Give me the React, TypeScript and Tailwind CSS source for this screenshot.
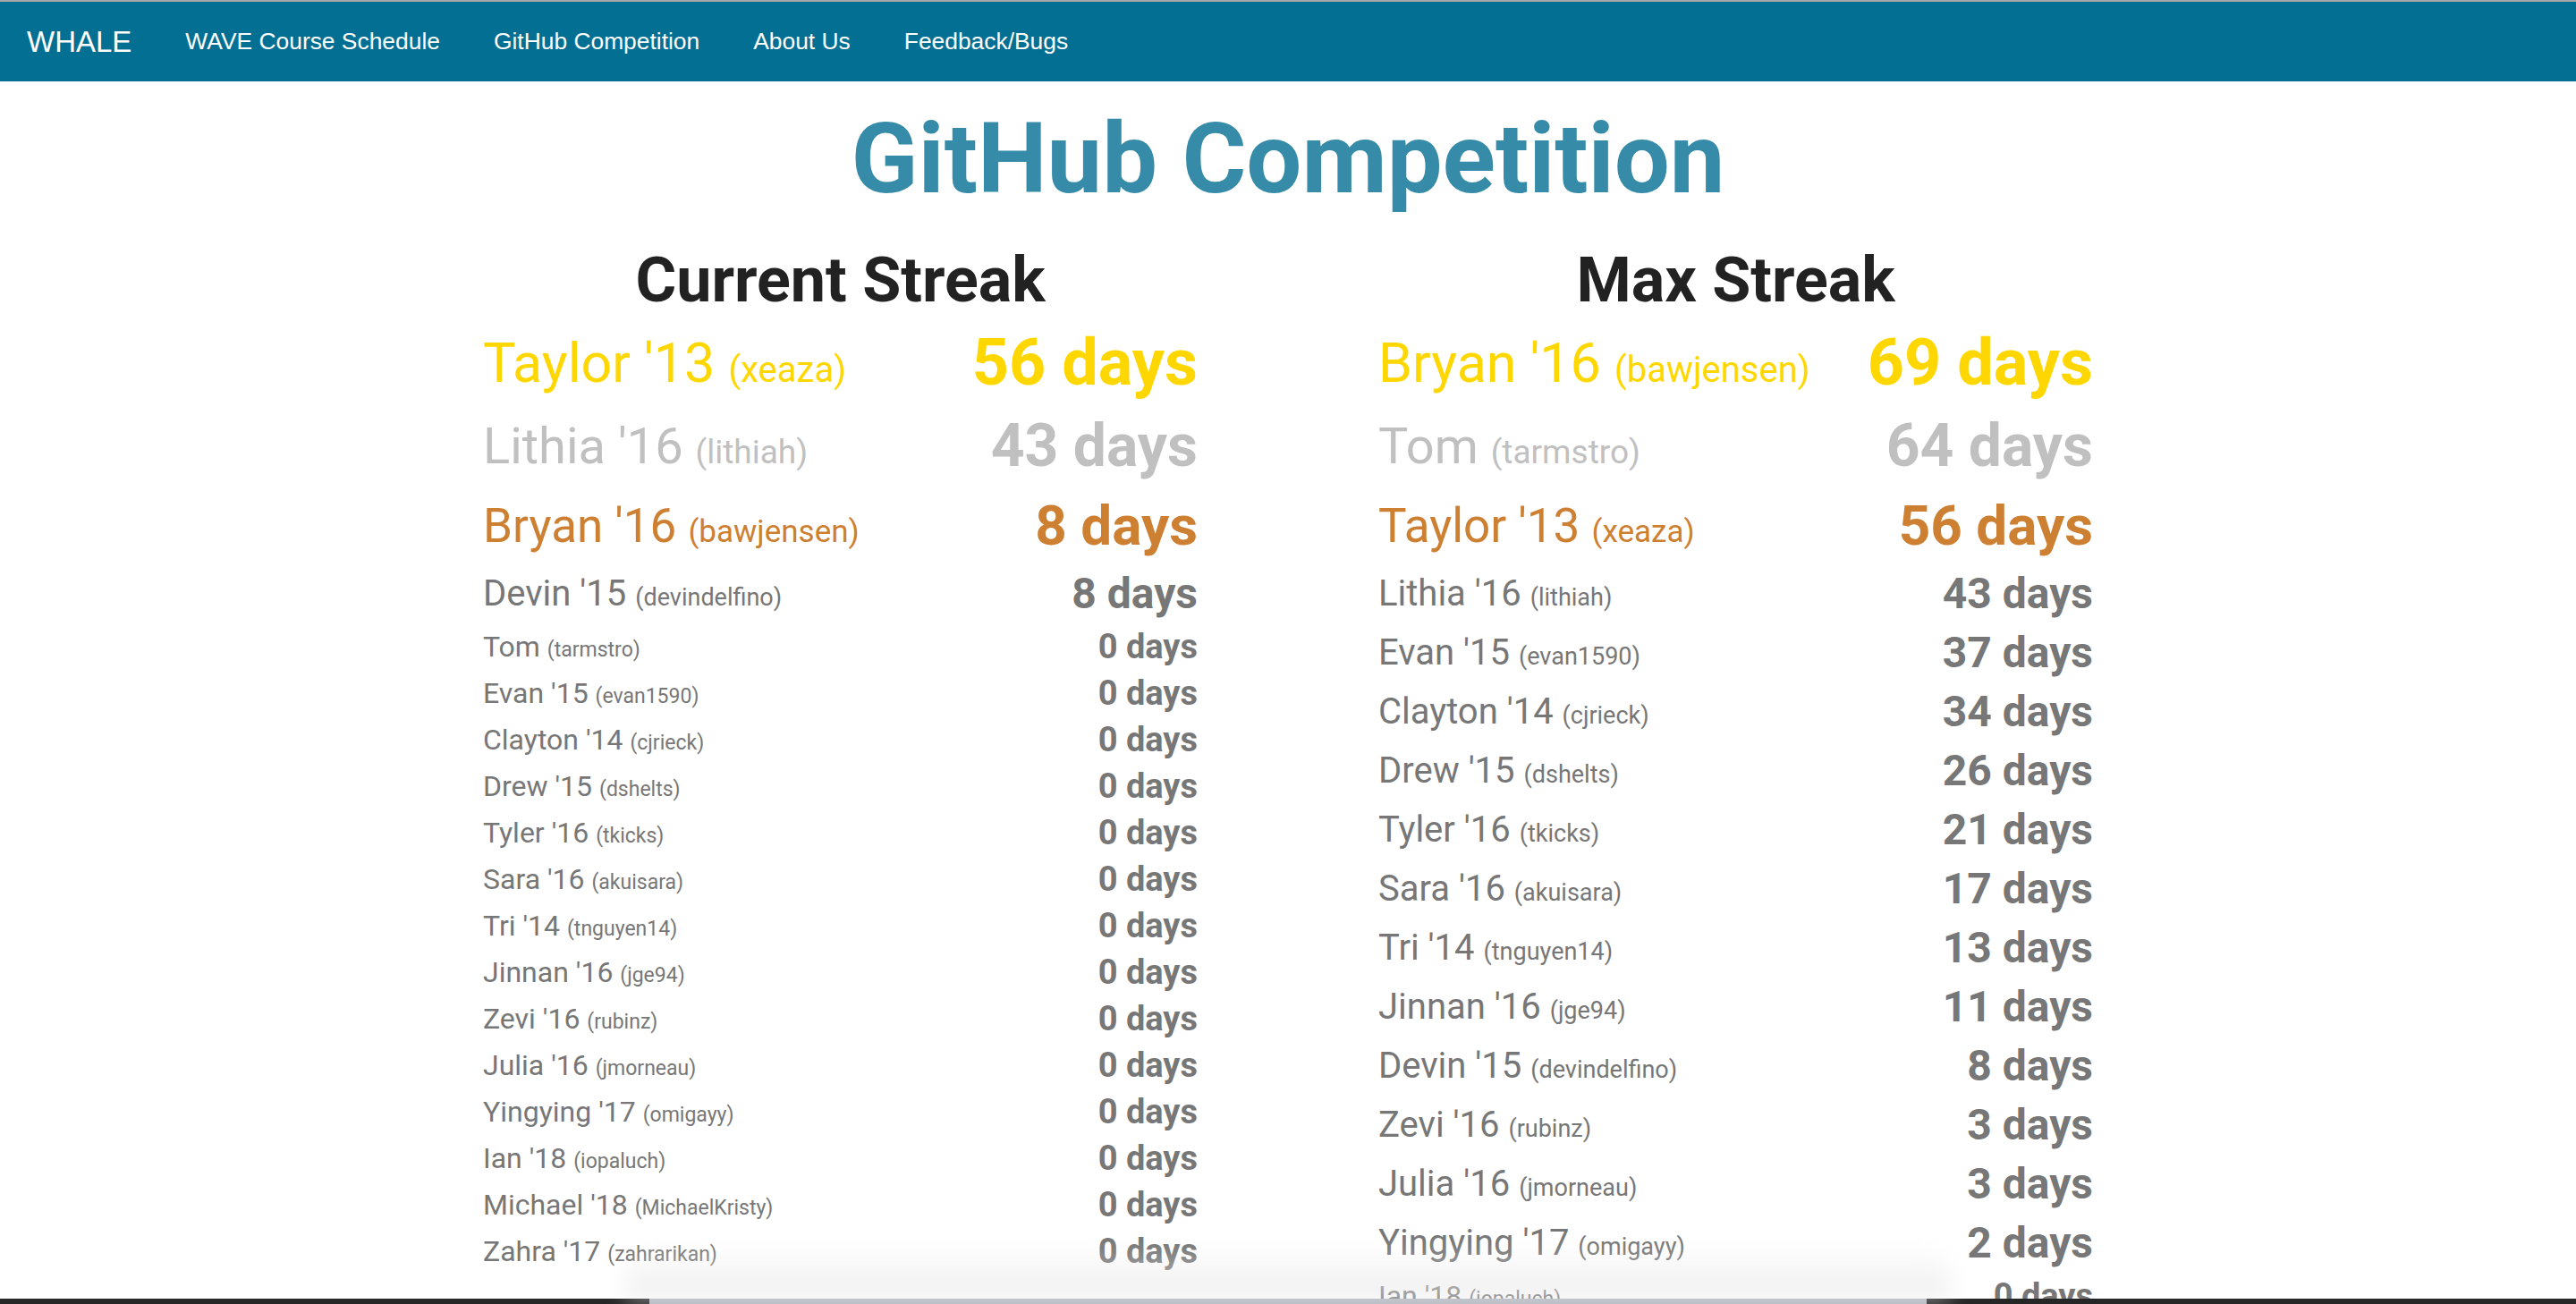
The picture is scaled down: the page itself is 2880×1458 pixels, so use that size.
interface Entry {
  name: string;
  handle: string;
  days: number;
}

const CURRENT: Entry[] = [
  { name: "Taylor '13", handle: "xeaza", days: 56 },
  { name: "Lithia '16", handle: "lithiah", days: 43 },
  { name: "Bryan '16", handle: "bawjensen", days: 8 },
  { name: "Devin '15", handle: "devindelfino", days: 8 },
  { name: "Tom", handle: "tarmstro", days: 0 },
  { name: "Evan '15", handle: "evan1590", days: 0 },
  { name: "Clayton '14", handle: "cjrieck", days: 0 },
  { name: "Drew '15", handle: "dshelts", days: 0 },
  { name: "Tyler '16", handle: "tkicks", days: 0 },
  { name: "Sara '16", handle: "akuisara", days: 0 },
  { name: "Tri '14", handle: "tnguyen14", days: 0 },
  { name: "Jinnan '16", handle: "jge94", days: 0 },
  { name: "Zevi '16", handle: "rubinz", days: 0 },
  { name: "Julia '16", handle: "jmorneau", days: 0 },
  { name: "Yingying '17", handle: "omigayy", days: 0 },
  { name: "Ian '18", handle: "iopaluch", days: 0 },
  { name: "Michael '18", handle: "MichaelKristy", days: 0 },
  { name: "Zahra '17", handle: "zahrarikan", days: 0 },
];

const MAX: Entry[] = [
  { name: "Bryan '16", handle: "bawjensen", days: 69 },
  { name: "Tom", handle: "tarmstro", days: 64 },
  { name: "Taylor '13", handle: "xeaza", days: 56 },
  { name: "Lithia '16", handle: "lithiah", days: 43 },
  { name: "Evan '15", handle: "evan1590", days: 37 },
  { name: "Clayton '14", handle: "cjrieck", days: 34 },
  { name: "Drew '15", handle: "dshelts", days: 26 },
  { name: "Tyler '16", handle: "tkicks", days: 21 },
  { name: "Sara '16", handle: "akuisara", days: 17 },
  { name: "Tri '14", handle: "tnguyen14", days: 13 },
  { name: "Jinnan '16", handle: "jge94", days: 11 },
  { name: "Devin '15", handle: "devindelfino", days: 8 },
  { name: "Zevi '16", handle: "rubinz", days: 3 },
  { name: "Julia '16", handle: "jmorneau", days: 3 },
  { name: "Yingying '17", handle: "omigayy", days: 2 },
  { name: "Ian '18", handle: "iopaluch", days: 0 },
  { name: "Michael '18", handle: "MichaelKristy", days: 0 },
  { name: "Zahra '17", handle: "zahrarikan", days: 0 },
];

// gold, silver, bronze, then everyone else by whether they have a streak
const TIERS = [
  { row: "h-[94px] text-[#ffd700]", name: "text-[61px]", handle: "text-[40px]", days: "text-[72px]" },
  { row: "h-[92px] text-[#c0c0c0]", name: "text-[56px]", handle: "text-[37px]", days: "text-[66px]" },
  { row: "h-[86px] text-[#cd7f32]", name: "text-[53px]", handle: "text-[35px]", days: "text-[62px]" },
  { row: "h-[66px] text-[#777777]", name: "text-[40px]", handle: "text-[27px]", days: "text-[48px]" },
  { row: "h-[52px] text-[#777777]", name: "text-[32px]", handle: "text-[23px]", days: "text-[38px]" },
];

function Row({ entry, rank }: { entry: Entry; rank: number }) {
  const tier = TIERS[rank < 3 ? rank : entry.days > 0 ? 3 : 4];
  return (
    <div className={`flex shrink-0 items-center justify-between ${tier.row}`}>
      <div className={`leading-none whitespace-nowrap ${tier.name}`}>
        {entry.name} <span className={tier.handle}>({entry.handle})</span>
      </div>
      <div className={`font-bold leading-none whitespace-nowrap ${tier.days}`}>
        {entry.days} days
      </div>
    </div>
  );
}

function Board({ title, entries }: { title: string; entries: Entry[] }) {
  return (
    <div className="flex flex-col">
      <h2 className="h-[72px] pt-[1px] text-center text-[70px] font-bold leading-none text-[#222222]">{title}</h2>
      <div className="mt-[10px] flex flex-col">
        {entries.map((e, i) => (
          <Row key={e.handle} entry={e} rank={i} />
        ))}
      </div>
    </div>
  );
}

const LINKS = ["WAVE Course Schedule", "GitHub Competition", "About Us", "Feedback/Bugs"];

export default function App() {
  return (
    <div className="relative flex h-[1458px] flex-col overflow-hidden bg-white font-['Roboto',sans-serif]">
      <nav className="flex h-[91px] shrink-0 items-center border-t-2 border-[#a8a8a8] bg-[#036f93] font-['Liberation_Sans',Arial,sans-serif] text-white">
        <a className="px-[30px] text-[33px] leading-none">WHALE</a>
        {LINKS.map((l) => (
          <a key={l} className="px-[30px] text-[26.4px] leading-none">
            {l}
          </a>
        ))}
      </nav>

      <div className="min-h-0 flex-1 overflow-hidden">
        <h1 className="mt-[32px] h-[111px] text-center text-[110px] font-bold leading-none text-[#368ba8]">
          GitHub Competition
        </h1>
        <div className="mx-auto mt-[43px] grid w-[1800px] grid-cols-2 gap-x-[202px]">
          <Board title="Current Streak" entries={CURRENT} />
          <Board title="Max Streak" entries={MAX} />
        </div>
      </div>

      {/* dock shadow from the screen grab */}
      <div className="pointer-events-none absolute bottom-[6px] left-[700px] h-[60px] w-[1480px] rounded-t-[40px] bg-gradient-to-b from-white/0 to-[#e6e6e6]/70 blur-md" />
      <div className="flex h-[6px] shrink-0 justify-center bg-[#262626]">
        <div className="w-[1428px] bg-[#b3b7bf]" />
      </div>
    </div>
  );
}
